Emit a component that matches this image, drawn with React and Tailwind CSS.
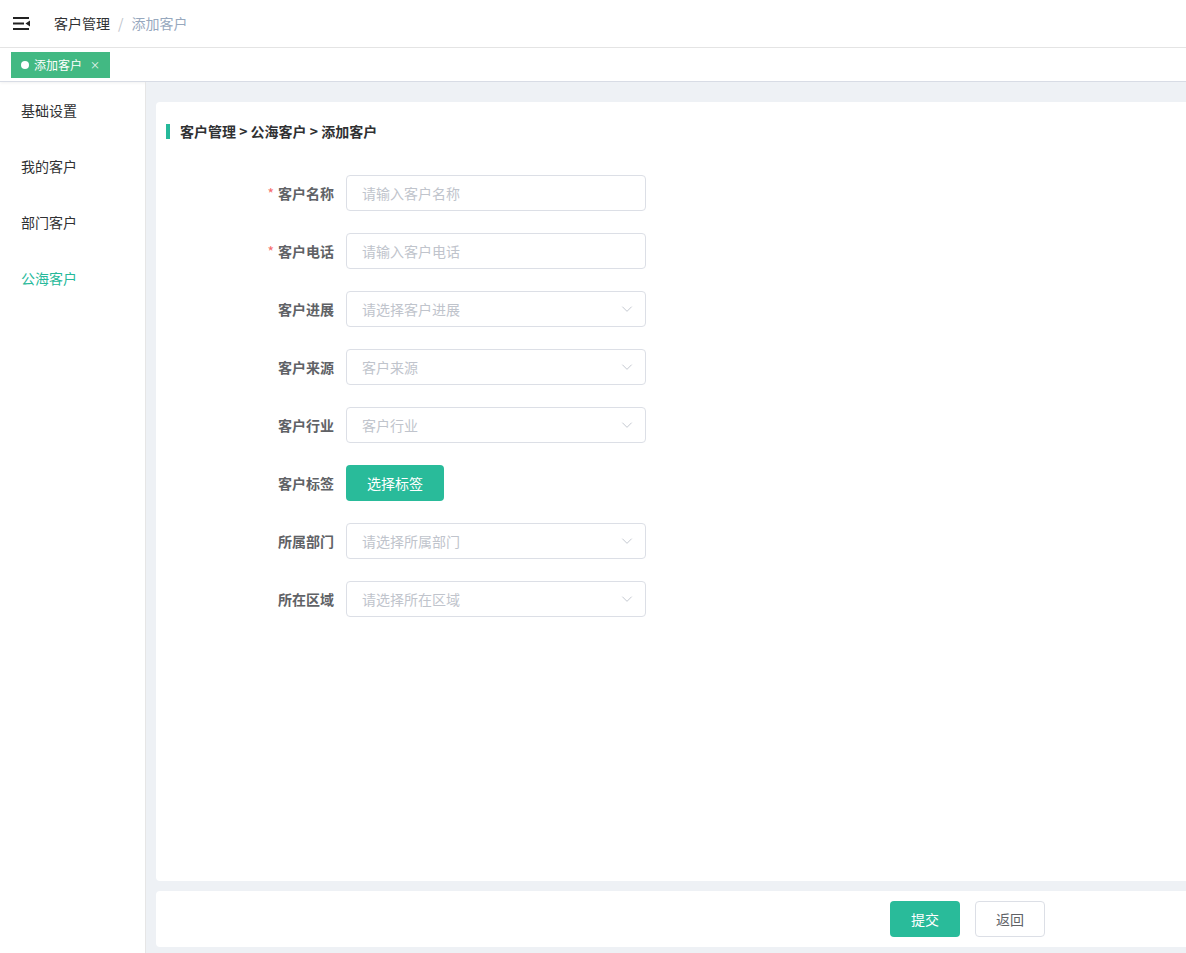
import React from 'react';

const fields = [
  { label: '客户名称', placeholder: '请输入客户名称', required: true, type: 'input' },
  { label: '客户电话', placeholder: '请输入客户电话', required: true, type: 'input' },
  { label: '客户进展', placeholder: '请选择客户进展', type: 'select' },
  { label: '客户来源', placeholder: '客户来源', type: 'select' },
  { label: '客户行业', placeholder: '客户行业', type: 'select' },
  { label: '客户标签', type: 'button' },
  { label: '所属部门', placeholder: '请选择所属部门', type: 'select' },
  { label: '所在区域', placeholder: '请选择所在区域', type: 'select' },
];

const menu = ['基础设置', '我的客户', '部门客户', '公海客户'];

const Chevron = () => (
  <svg className="w-[14px] h-[14px] text-[#c0c4cc]" viewBox="0 0 24 24" fill="none" stroke="currentColor" strokeWidth="1.6">
    <path d="M4 8l8 8 8-8" />
  </svg>
);

const App = () => {
  return (
    <div className="h-[953px] flex flex-col bg-white text-[#303133] overflow-hidden" style={{ fontFamily: '"Noto Sans CJK SC", "Liberation Sans", sans-serif' }}>
      {/* Header */}
      <div className="h-[48px] shrink-0 flex items-center border-b border-[#e6e6e6]">
        <div className="pl-[13px] pr-[24px]">
          <svg width="17" height="13" viewBox="0 0 17 13">
            <rect x="0" y="0" width="16" height="2" fill="#222" />
            <rect x="0" y="5.5" width="11" height="2" fill="#222" />
            <rect x="0" y="11" width="16" height="2" fill="#222" />
            <path d="M17 3.5 L12.5 6.5 L17 9.5 Z" fill="#222" />
          </svg>
        </div>
        <div className="flex items-center text-[14px]">
          <span className="text-[#303133]">客户管理</span>
          <span className="mx-[8px] text-[#c0c4cc]">/</span>
          <span className="text-[#97a8be]">添加客户</span>
        </div>
      </div>

      {/* Tags bar */}
      <div className="h-[34px] shrink-0 flex items-center pl-[11px] border-b border-[#d8dce5] shadow-[0_1px_3px_0_rgba(0,0,0,0.06)]">
        <div className="h-[26px] flex items-center px-[9px] bg-[#42b983] text-white text-[12px] border border-[#42b983]">
          <span className="w-[8px] h-[8px] rounded-full bg-white mr-[5px]" />
          <span>添加客户</span>
          <span className="ml-[8px] text-[10px] opacity-90">×</span>
        </div>
      </div>

      <div className="flex-1 flex min-h-0">
        {/* Sidebar */}
        <div className="w-[146px] shrink-0 border-r border-[#e6e6e6]">
          {menu.map((m, i) => (
            <div key={m} className={`h-[56px] flex items-center pl-[21px] text-[14px] ${i === 3 ? 'text-[#26b99a]' : 'text-[#303133]'}`}>
              {m}
            </div>
          ))}
        </div>

        {/* Main */}
        <div className="flex-1 bg-[#eef1f5] pt-[20px] pl-[10px] flex flex-col gap-[10px] pb-[6px]">
          <div className="flex-1 bg-white rounded-l-[4px] pl-[10px] pt-[20px]">
            <div className="flex items-center h-[18px]">
              <span className="w-[4px] h-[15px] bg-[#26b99a] mr-[10px]" />
              <span className="text-[14px] font-bold text-[#303133]">客户管理 &gt; 公海客户 &gt; 添加客户</span>
            </div>
            <div className="mt-[35px] flex flex-col gap-[22px]">
              {fields.map((f) => (
                <div key={f.label} className="flex items-center h-[36px]">
                  <div className="w-[180px] pr-[12px] text-right text-[14px] font-bold text-[#606266]">
                    {f.required && <span className="text-[#f56c6c] mr-[4px] font-normal">*</span>}
                    {f.label}
                  </div>
                  {f.type === 'button' ? (
                    <button className="h-[36px] w-[98px] rounded-[4px] bg-[#29bb9a] text-white text-[14px]">选择标签</button>
                  ) : (
                    <div className="w-[300px] h-[36px] border border-[#dcdfe6] rounded-[4px] flex items-center justify-between pl-[15px] pr-[11px]">
                      <span className="text-[14px] text-[#c0c4cc]">{f.placeholder}</span>
                      {f.type === 'select' && <Chevron />}
                    </div>
                  )}
                </div>
              ))}
            </div>
          </div>
          <div className="h-[56px] shrink-0 bg-white rounded-l-[4px] flex items-center pl-[734px] gap-[15px]">
            <button className="h-[36px] w-[70px] rounded-[4px] bg-[#29bb9a] text-white text-[14px]">提交</button>
            <button className="h-[36px] w-[70px] rounded-[4px] border border-[#dcdfe6] bg-white text-[#606266] text-[14px]">返回</button>
          </div>
        </div>
      </div>
    </div>
  );
};

export default App;
